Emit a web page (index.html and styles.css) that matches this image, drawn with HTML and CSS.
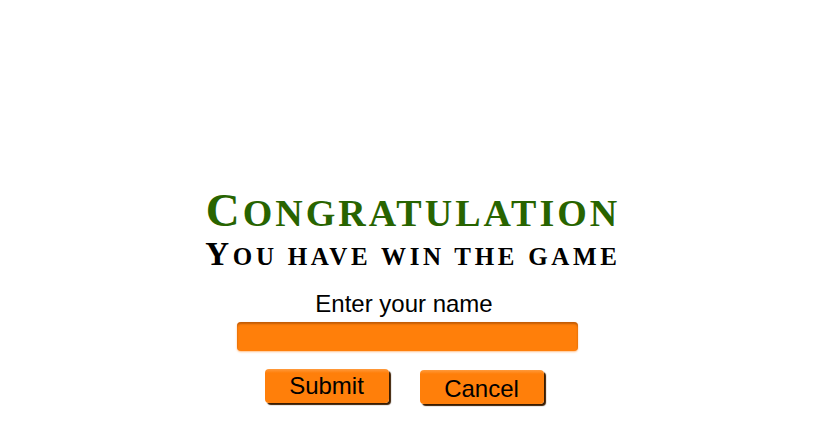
FILE: index.html
```html
<!DOCTYPE html>
<html>
<head>
<meta charset="utf-8">
<link rel="stylesheet" href="styles.css">
</head>
<body>
<main class="panel">
  <h1 class="title"><span class="cap">C</span>ONGRATULATION</h1>
  <h2 class="subtitle"><span class="cap">Y</span>OU HAVE WIN THE GAME</h2>
  <label class="label" for="name">Enter your name</label>
  <input class="name-input" id="name" type="text">
  <div class="actions">
    <button class="btn" type="button">Submit</button>
    <button class="btn btn-cancel" type="button">Cancel</button>
  </div>
</main>
</body>
</html>
```
FILE: styles.css
```css
html, body {
  margin: 0;
  padding: 0;
  background: #ffffff;
}
.panel {
  width: 820px;
  height: 445px;
  display: flex;
  flex-direction: column;
  align-items: center;
  padding-top: 188px;
  box-sizing: border-box;
}
.title {
  margin: 0 0 0 6px;
  font-family: "Liberation Serif", serif;
  font-weight: bold;
  font-size: 38px;
  line-height: 44px;
  color: #286400;
  letter-spacing: 3px;
}
.title .cap {
  font-size: 47px;
}
.subtitle {
  margin: 2px 0 0 6px;
  font-family: "Liberation Serif", serif;
  font-weight: bold;
  font-size: 25px;
  line-height: 34px;
  color: #000000;
  letter-spacing: 3.7px;
}
.subtitle .cap {
  font-size: 33px;
}
.label {
  margin: 16px 12px 0 0;
  font-family: "Liberation Sans", Arial, sans-serif;
  font-size: 24px;
  line-height: 28px;
  color: #000;
}
.name-input {
  margin: 4px 5px 0 0;
  width: 341px;
  height: 29px;
  box-sizing: border-box;
  border: none;
  border-radius: 4px;
  background: #ff7f0a;
  box-shadow: inset 0 2px 2px rgba(120, 50, 0, 0.45), 0 1px 2px rgba(255, 150, 60, 0.6);
  outline: none;
}
.actions {
  margin: 18px 12px 0 0;
  display: flex;
  gap: 31px;
}
.btn {
  width: 124px;
  height: 34px;
  border: none;
  border-radius: 4px;
  background: linear-gradient(#ff9a3c 0, #ff7f0a 4px, #ff7f0a 100%);
  box-shadow: 2px 2px 1px #3a1c00;
  font-family: "Liberation Sans", Arial, sans-serif;
  font-size: 24px;
  color: #000;
  padding: 0;
  line-height: 34px;
}
.btn-cancel {
  margin-top: 1px;
  padding-top: 2px;
}
```
